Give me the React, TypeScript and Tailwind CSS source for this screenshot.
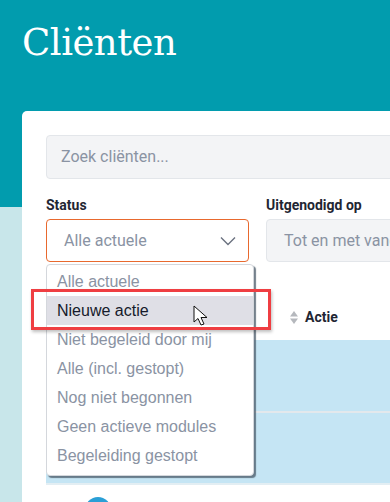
import React from "react";

const items = [
  "Alle actuele",
  "Nieuwe actie",
  "Niet begeleid door mij",
  "Alle (incl. gestopt)",
  "Nog niet begonnen",
  "Geen actieve modules",
  "Begeleiding gestopt",
];

export default function App() {
  return (
    <div className="relative w-[390px] h-[502px] overflow-hidden bg-[linear-gradient(to_bottom,#019cae_207px,#c8e6ea_207px)] font-['Roboto',sans-serif]">
      <h1 className="pl-[22px] pt-[19px] h-[111px] text-white text-[37px] leading-[48px] font-['DejaVu_Serif',serif] font-light tracking-[-0.5px]">
        Cliënten
      </h1>
      <div className="ml-[22px] w-[420px] bg-white rounded-tl-[5px] pt-[24px] pl-[24px] pb-[40px]">
        <div className="h-[44px] rounded-[4px] border border-[#e3e6ea] bg-[#f3f4f6] flex items-center pl-[14px] text-[16px] text-[#8a93a3]">
          Zoek cliënten...
        </div>
        <div className="flex gap-[17px] mt-[16px]">
          <div className="relative w-[203px] shrink-0">
            <div className="text-[14px] font-bold text-[#1f2633] leading-[20px] mb-[4px]">Status</div>
            <div className="h-[43px] rounded-[4px] border-[1.5px] border-[#e8692e] bg-white flex items-center justify-between pl-[17px] pr-[12px] text-[16px] text-[#8a93a3]">
              <span>Alle actuele</span>
              <svg width="16" height="10" viewBox="0 0 16 10" fill="none" stroke="#6b7280" strokeWidth="1.4">
                <path d="M1 1.5 L8 8.5 L15 1.5" />
              </svg>
            </div>
          </div>
          <div className="w-[200px] shrink-0">
            <div className="text-[14px] font-bold text-[#1f2633] leading-[20px] mb-[4px]">Uitgenodigd op</div>
            <div className="h-[43px] rounded-[4px] border border-[#e3e6ea] bg-[#f3f4f6] flex items-center pl-[17px] text-[16px] text-[#8a93a3] whitespace-nowrap">
              Tot en met vandaag
            </div>
          </div>
        </div>
        <div className="h-[78px] flex items-end pb-[12px] pl-[244px]">
          <div className="flex items-center gap-[7px]">
            <svg width="8" height="13" viewBox="0 0 8 13" fill="#b5b8bd">
              <path d="M4 0 L8 5.5 L0 5.5 Z" />
              <path d="M0 7.5 L8 7.5 L4 13 Z" />
            </svg>
            <span className="text-[14px] font-bold text-[#1f2633]">Actie</span>
          </div>
        </div>
        <div className="bg-[#c5e5f4]">
          <div className="h-[73px] border-b-2 border-[#e3e8ec]" />
          <div className="h-[70px]" />
        </div>
        <div className="h-[2px] bg-[#e3eef3]" />
        <div className="pl-[39px] pt-[12px]">
          <div className="w-[26px] h-[26px] rounded-full bg-[#2a9fd6]" />
        </div>
      </div>

      {/* dropdown menu */}
      <div className="absolute left-[46px] top-[264px] w-[208px] h-[212px] bg-white rounded-[4px] border border-[#d4d7dc] shadow-[2px_2px_1px_rgba(70,85,100,0.75)] pt-[2px] font-['Liberation_Sans',Arial,sans-serif]">
        {items.map((it, i) => (
          <div
            key={it}
            className={
              i === 1
                ? "h-[29px] flex items-center pl-[10px] text-[16px] bg-[#dfdfe6] text-[#151a2b]"
                : "h-[29px] flex items-center pl-[10px] text-[16px] text-[#8a93a3]"
            }
          >
            {it}
          </div>
        ))}
      </div>

      {/* red highlight box */}
      <div className="absolute left-[31px] top-[289px] w-[240px] h-[41px] border-[3px] border-[#ef3e42] shadow-[1px_2px_3px_rgba(0,0,0,0.25)]" />

      {/* cursor */}
      <svg className="absolute left-[193px] top-[305px]" width="20" height="24" viewBox="0 0 20 24">
        <path d="M1 1 L1 17 L5 13.5 L8 20 L11 19 L8 12.5 L14 12.5 Z" fill="white" stroke="#111" strokeWidth="1" strokeLinejoin="round" />
      </svg>
    </div>
  );
}
